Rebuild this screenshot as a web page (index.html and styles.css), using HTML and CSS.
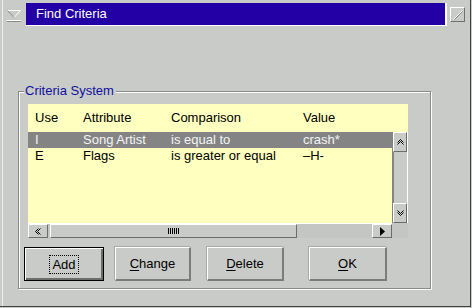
FILE: index.html
```html
<!DOCTYPE html>
<html>
<head>
<meta charset="utf-8">
<link rel="stylesheet" href="styles.css">
</head>
<body>
<div class="window">
  <div class="titlerow">
    <span class="sysicon">
      <svg width="16" height="14" viewBox="0 0 16 14">
        <polyline points="1.5,1.5 14.5,1.5 8,8.5" fill="none" stroke="#ffffff" stroke-width="1"/>
        <polyline points="1.5,1.5 8,8.5" fill="none" stroke="#8a8a8a" stroke-width="1"/>
        <line x1="1" y1="11.5" x2="15" y2="11.5" stroke="#ffffff" stroke-width="1"/>
        <line x1="1" y1="12.5" x2="15" y2="12.5" stroke="#8a8a8a" stroke-width="1"/>
      </svg>
    </span>
    <div class="titlebar">Find Criteria</div>
    <span class="maxbtn">
      <svg width="10" height="10" viewBox="0 0 10 10">
        <line x1="0.5" y1="9.5" x2="9.5" y2="0.5" stroke="#ffffff" stroke-width="1"/>
        <line x1="1.5" y1="9.5" x2="9.5" y2="1.5" stroke="#808080" stroke-width="1"/>
      </svg>
    </span>
  </div>

  <div class="group">
    <span class="group-label">Criteria System</span>
    <div class="listbox">
      <div class="row head">
        <span>Use</span><span>Attribute</span><span>Comparison</span><span>Value</span>
      </div>
      <div class="rows">
        <div class="row sel">
          <span>I</span><span>Song Artist</span><span>is equal to</span><span>crash*</span>
        </div>
        <div class="row">
          <span>E</span><span>Flags</span><span>is greater or equal</span><span>–H-</span>
        </div>
      </div>
      <div class="vscroll">
        <span class="sbtn vbtn">
          <svg width="7" height="6" viewBox="0 0 7 6"><polyline points="0.5,3.5 3.5,0.5 6.5,3.5" fill="none" stroke="#000" stroke-width="1"/><polyline points="0.5,5.5 3.5,2.5 6.5,5.5" fill="none" stroke="#000" stroke-width="1"/></svg>
        </span>
        <span class="vtrack"></span>
        <span class="sbtn vbtn">
          <svg width="7" height="6" viewBox="0 0 7 6"><polyline points="0.5,0.5 3.5,3.5 6.5,0.5" fill="none" stroke="#000" stroke-width="1"/><polyline points="0.5,2.5 3.5,5.5 6.5,2.5" fill="none" stroke="#000" stroke-width="1"/></svg>
        </span>
      </div>
      <div class="hscroll">
        <span class="sbtn hbtn">
          <svg width="6" height="7" viewBox="0 0 6 7"><polyline points="3.5,0.5 0.5,3.5 3.5,6.5" fill="none" stroke="#000" stroke-width="1"/><polyline points="5.5,0.5 2.5,3.5 5.5,6.5" fill="none" stroke="#000" stroke-width="1"/></svg>
        </span>
        <span class="thumb"><span class="grip"></span></span>
        <span class="htrack"></span>
        <span class="sbtn hbtn">
          <svg width="5" height="9" viewBox="0 0 5 9"><polygon points="0,0 5,4.5 0,9" fill="#000"/></svg>
        </span>
      </div>
      <div class="corner"></div>
    </div>

    <div class="buttons">
      <button class="btn default btn-add"><span class="focus">Add</span></button>
      <button class="btn btn-change"><u>C</u>hange</button>
      <button class="btn btn-delete"><u>D</u>elete</button>
      <button class="btn btn-ok"><u>O</u>K</button>
    </div>
  </div>
</div>
</body>
</html>
```

FILE: styles.css
```css
html, body {
  margin: 0;
  padding: 0;
  background: #c8cbc8;
}

body {
  font-family: "Liberation Sans", Arial, sans-serif;
  font-size: 13px;
  color: #000;
}

.window {
  width: 471px;
  height: 307px;
  box-sizing: border-box;
  border-right: 1px solid #404040;
  border-bottom: 1px solid #404040;
  box-shadow: inset 2px 0 0 #c8cbc8, inset 3px 0 0 #eef0ee;
  padding-top: 3px;
  display: flex;
  flex-direction: column;
}

.titlerow {
  display: flex;
  align-items: flex-start;
  height: 23px;
}

.sysicon {
  width: 26px;
  height: 23px;
  display: flex;
  align-items: flex-start;
  justify-content: flex-start;
  padding: 6px 0 0 6px;
  box-sizing: border-box;
}

.titlebar {
  width: 421px;
  height: 23px;
  box-sizing: border-box;
  background: #2200a6;
  border-right: 2px solid #ffffff;
  border-bottom: 1px solid #ffffff;
  color: #ffffff;
  padding-left: 10px;
  line-height: 22px;
}

.maxbtn {
  margin: 4px 0 0 3px;
  width: 15px;
  height: 15px;
  box-sizing: border-box;
  border: 1px solid;
  border-color: #ffffff #707070 #707070 #ffffff;
  display: flex;
  align-items: center;
  justify-content: center;
}

.group {
  position: relative;
  margin: 65px 0 0 18px;
  width: 413px;
  height: 198px;
  box-sizing: border-box;
  border: 1px solid #8a8a8a;
  border-right-color: #8a8a8a;
  box-shadow: inset 1px 1px 0 #ffffff, 1px 1px 0 #ffffff;
  padding: 12px 0 0 5px;
}

.group-label {
  position: absolute;
  left: 5px;
  top: -9px;
  padding: 0 2px 0 1px;
  background: #c8cbc8;
  color: #1010a0;
  line-height: 16px;
}

.listbox {
  margin-left: 4px;
  width: 380px;
  height: 134px;
  display: grid;
  grid-template-columns: 364px 16px;
  grid-template-rows: 28px 91px 15px;
  background: #ffffc0;
}

.row {
  display: grid;
  grid-template-columns: 48px 88px 132px 1fr;
  padding-left: 7px;
  height: 16px;
  line-height: 16px;
  white-space: nowrap;
}

.row.head {
  grid-column: 1 / 3;
  height: 28px;
  line-height: 28px;
}

.rows {
  grid-column: 1;
  grid-row: 2;
}

.row.sel {
  background: #848484;
  color: #f4f4f4;
}

.vscroll {
  grid-column: 2;
  grid-row: 2;
  display: flex;
  flex-direction: column;
  background: #c8cbc8;
  border-left: 1px solid #848484;
  border-right: 1px solid #ffffff;
}

.sbtn {
  box-sizing: border-box;
  background: #c8cbc8;
  border: 1px solid;
  border-color: #ffffff #6c6c6c #6c6c6c #ffffff;
  display: flex;
  align-items: center;
  justify-content: center;
}

.vbtn {
  height: 20px;
  flex: none;
}

.vtrack {
  flex: 1;
  border-left: 1px solid #848484;
}

.hscroll {
  grid-column: 1;
  grid-row: 3;
  display: flex;
  background: #c4c6c4;
  border-top: 1px solid #ffffff;
  box-sizing: border-box;
}

.hbtn {
  width: 20px;
  flex: none;
}

.thumb {
  margin-left: 2px;
  width: 247px;
  box-sizing: border-box;
  background: #c8cbc8;
  border: 1px solid;
  border-color: #ffffff #6c6c6c #6c6c6c #ffffff;
  display: flex;
  align-items: center;
  justify-content: center;
}

.grip {
  width: 11px;
  height: 6px;
  background: repeating-linear-gradient(90deg, #000 0 1px, transparent 1px 2px);
}

.htrack {
  flex: 1;
}

.corner {
  grid-column: 2;
  grid-row: 3;
  background: #c4c6c4;
}

.buttons {
  display: flex;
  margin-top: 9px;
  height: 34px;
}

.btn {
  height: 34px;
  box-sizing: border-box;
  font-family: "Liberation Sans", Arial, sans-serif;
  font-size: 13px;
  color: #000;
  background: #c8cbc8;
  border-style: solid;
  border-width: 1px 2px 2px 1px;
  border-color: #ffffff #7c7c7c #7c7c7c #ffffff;
  box-shadow: -1px -1px 0 #a8aaa8;
  padding: 0;
}

.btn u {
  text-decoration-thickness: 1px;
  text-underline-offset: 2px;
}

.btn.default {
  border: 1px solid #000;
  box-shadow: inset 1px 1px 0 #ffffff, inset -2px -2px 0 #6c6c6c;
}

.btn-add { width: 80px; }
.btn-change { width: 76px; margin-left: 11px; }
.btn-delete { width: 77px; margin-left: 16px; }
.btn-ok { width: 78px; margin-left: 25px; }

.focus {
  outline: 1px dotted #000;
  outline-offset: 1px;
  padding: 0 1px;
}
```
